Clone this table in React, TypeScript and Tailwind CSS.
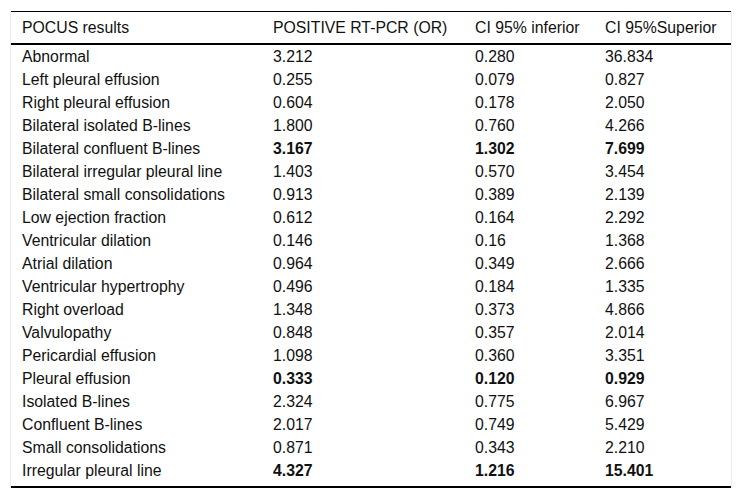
const rows: [string, string, string, string, boolean][] = [
  ["Abnormal", "3.212", "0.280", "36.834", false],
  ["Left pleural effusion", "0.255", "0.079", "0.827", false],
  ["Right pleural effusion", "0.604", "0.178", "2.050", false],
  ["Bilateral isolated B-lines", "1.800", "0.760", "4.266", false],
  ["Bilateral confluent B-lines", "3.167", "1.302", "7.699", true],
  ["Bilateral irregular pleural line", "1.403", "0.570", "3.454", false],
  ["Bilateral small consolidations", "0.913", "0.389", "2.139", false],
  ["Low ejection fraction", "0.612", "0.164", "2.292", false],
  ["Ventricular dilation", "0.146", "0.16", "1.368", false],
  ["Atrial dilation", "0.964", "0.349", "2.666", false],
  ["Ventricular hypertrophy", "0.496", "0.184", "1.335", false],
  ["Right overload", "1.348", "0.373", "4.866", false],
  ["Valvulopathy", "0.848", "0.357", "2.014", false],
  ["Pericardial effusion", "1.098", "0.360", "3.351", false],
  ["Pleural effusion", "0.333", "0.120", "0.929", true],
  ["Isolated B-lines", "2.324", "0.775", "6.967", false],
  ["Confluent B-lines", "2.017", "0.749", "5.429", false],
  ["Small consolidations", "0.871", "0.343", "2.210", false],
  ["Irregular pleural line", "4.327", "1.216", "15.401", true],
]

export default function App() {
  return (
    <div className="w-[742px] h-[499px] bg-white pl-[10px] pt-[11px] font-['Liberation_Sans',Arial,sans-serif] text-[15.8px] leading-[18px] text-[#111]">
      <div className="w-[722px] border-x border-[#ececec]">
        <table className="table-fixed border-collapse w-[720px]">
          <colgroup>
            <col className="w-[251px]" />
            <col className="w-[202px]" />
            <col className="w-[130px]" />
            <col className="w-[137px]" />
          </colgroup>
          <thead>
            <tr className="border-t border-b-2 border-black text-left">
              <th className="font-normal pl-[11px] pt-[7px] pb-[6px]">POCUS results</th>
              <th className="font-normal pl-[11px] pt-[7px] pb-[6px]">POSITIVE RT-PCR (OR)</th>
              <th className="font-normal pl-[11px] pt-[7px] pb-[6px]">CI 95% inferior</th>
              <th className="font-normal pl-[11px] pt-[7px] pb-[6px]">CI 95%Superior</th>
            </tr>
          </thead>
          <tbody className="border-b-2 border-black">
            {rows.map(([name, or, lo, hi, bold], i) => {
              const first = i === 0
              const last = i === rows.length - 1
              const pad = last
                ? "pt-[2.5px] pb-[6px]"
                : first
                  ? "pt-[3px] pb-[2.5px]"
                  : "py-[2.5px]"
              const b = bold ? "font-bold" : ""
              return (
                <tr key={name}>
                  <td className={`pl-[11px] ${pad}`}>{name}</td>
                  <td className={`pl-[11px] ${pad} ${b}`}>{or}</td>
                  <td className={`pl-[11px] ${pad} ${b}`}>{lo}</td>
                  <td className={`pl-[11px] ${pad} ${b}`}>{hi}</td>
                </tr>
              )
            })}
          </tbody>
        </table>
      </div>
    </div>
  )
}
